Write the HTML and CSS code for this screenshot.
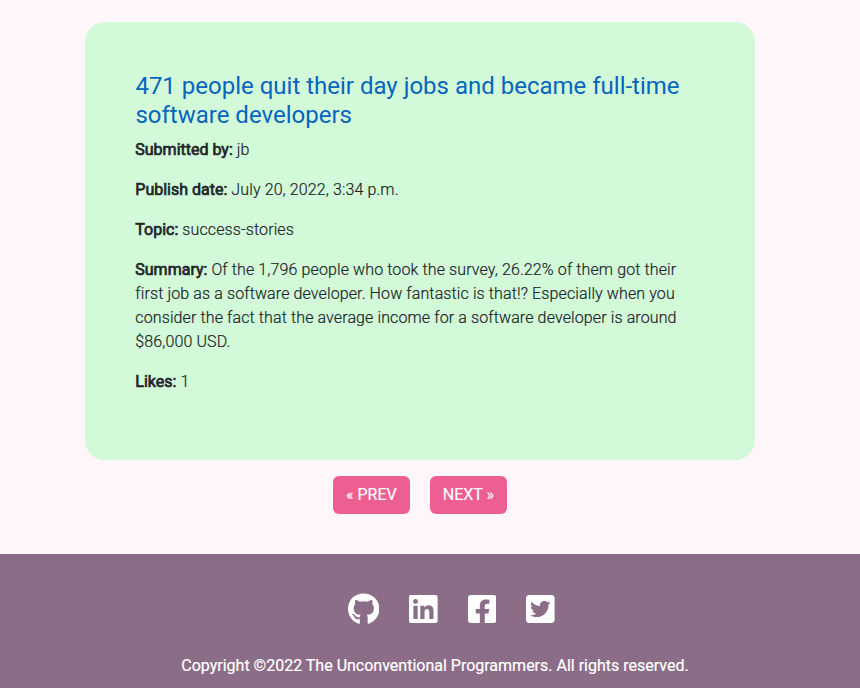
FILE: index.html
```html
<!DOCTYPE html>
<html lang="en">
<head>
<meta charset="utf-8">
<title>Success stories</title>
<link rel="stylesheet" href="styles.css">
</head>
<body>
<main>
  <article class="card">
    <h2><a href="#">471 people quit their day jobs and became full-time software developers</a></h2>
    <p><strong>Submitted by:</strong> jb</p>
    <p><strong>Publish date:</strong> July 20, 2022, 3:34 p.m.</p>
    <p><strong>Topic:</strong> success-stories</p>
    <p><strong>Summary:</strong> Of the 1,796 people who took the survey, 26.22% of them got their first job as a software developer. How fantastic is that!? Especially when you consider the fact that the average income for a software developer is around $86,000 USD.</p>
    <p><strong>Likes:</strong> 1</p>
  </article>
  <nav class="pager">
    <a class="btn" href="#">« PREV</a>
    <a class="btn" href="#">NEXT »</a>
  </nav>
</main>
<footer>
  <div class="social">
    <a href="#"><svg width="31.400" height="32" viewBox="0 0 496 512" preserveAspectRatio="none"><path d="M165.900 397.400c0 2-2.300 3.600-5.200 3.600-3.300.3-5.600-1.300-5.600-3.600 0-2 2.300-3.600 5.200-3.600 3-.3 5.600 1.300 5.600 3.600zM244.800 8C106.100 8 0 113.300 0 252c0 110.900 69.800 205.800 169.500 239.200 12.800 2.300 17.300-5.600 17.300-12.100 0-6.200-.3-40.400-.3-61.400 0 0-70 15-84.700-29.800 0 0-11.400-29.100-27.800-36.600 0 0-22.900-15.700 1.600-15.400 0 0 24.900 2 38.600 25.800 21.900 38.600 58.600 27.500 72.900 20.900 2.300-16 8.800-27.100 16-33.700-55.900-6.200-112.300-14.300-112.300-110.500 0-27.500 7.600-41.300 23.600-58.900-2.600-6.500-11.100-33.300 2.600-67.900 20.900-6.500 69 27 69 27 20-5.600 41.500-8.500 62.800-8.500s42.800 2.900 62.800 8.500c0 0 48.100-33.600 69-27 13.700 34.700 5.200 61.400 2.600 67.900 16 17.700 25.800 31.500 25.800 58.900 0 96.500-58.900 104.200-114.800 110.500 9.200 7.900 17 22.900 17 46.400 0 33.700-.3 75.400-.3 83.600 0 6.500 4.600 14.400 17.300 12.100C428.200 457.800 496 362.900 496 252 496 113.300 383.500 8 244.800 8z"/></svg></a>
    <a href="#"><svg width="28.600" height="32" viewBox="0 0 448 512" preserveAspectRatio="none"><path d="M416 32H31.900C14.300 32 0 46.500 0 64.300v383.400C0 465.500 14.300 480 31.900 480H416c17.600 0 32-14.500 32-32.300V64.300c0-17.800-14.400-32.300-32-32.300zM135.400 416H69V202.200h66.500V416zm-33.200-243c-21.300 0-38.500-17.300-38.500-38.500S80.900 96 102.200 96c21.200 0 38.500 17.300 38.500 38.500 0 21.300-17.200 38.500-38.500 38.500zm282.100 243h-66.400V312c0-24.800-.5-56.700-34.500-56.700-34.600 0-39.900 27-39.900 54.900V416h-66.400V202.200h63.700v29.200h.9c8.900-16.800 30.600-34.500 62.900-34.500 67.200 0 79.700 44.300 79.700 101.900V416z"/></svg></a>
    <a href="#"><svg width="28.600" height="32" viewBox="0 0 448 512" preserveAspectRatio="none"><path d="M400 32H48A48 48 0 0 0 0 80v352a48 48 0 0 0 48 48h137.250V327.690h-63V256h63v-54.640c0-62.150 37-96.480 93.670-96.480 27.140 0 55.520 4.840 55.520 4.840v61h-31.270c-30.810 0-40.420 19.120-40.420 38.730V256h68.780l-11 71.690h-57.780V480H400a48 48 0 0 0 48-48V80a48 48 0 0 0-48-48z"/></svg></a>
    <a href="#"><svg width="28.600" height="32" viewBox="0 0 448 512" preserveAspectRatio="none"><path d="M400 32H48C21.500 32 0 53.500 0 80v352c0 26.500 21.500 48 48 48h352c26.500 0 48-21.500 48-48V80c0-26.500-21.500-48-48-48zm-48.900 158.800c.2 2.800.2 5.700.2 8.500 0 86.700-66 186.600-186.600 186.600-37.200 0-71.700-10.800-100.700-29.400 5.300.6 10.400.8 15.800.8 30.700 0 58.900-10.400 81.400-28-28.800-.6-53-19.500-61.300-45.500 10.100 1.500 19.200 1.500 29.600-1.200-30-6.100-52.500-32.500-52.500-64.400v-.8c8.700 4.900 18.900 7.900 29.600 8.300a65.447 65.447 0 0 1-29.200-54.600c0-12.200 3.200-23.400 8.900-33.100 32.300 39.800 80.800 65.800 135.200 68.600-9.300-44.500 24-80.600 64-80.600 18.900 0 35.900 7.900 47.900 20.700 14.800-2.800 29-8.300 41.600-15.800-4.900 15.200-15.200 28-28.800 36.100 13.200-1.400 26-5.100 37.800-10.200-8.900 13.100-20.100 24.700-32.900 34z"/></svg></a>
  </div>
  <p>Copyright ©2022 The Unconventional Programmers. All rights reserved.</p>
</footer>
</body>
</html>
```
FILE: styles.css
```css
* { box-sizing: border-box; }
body { margin: 0; background: #fff6f9; color: #212529; font: 300 16px/24px Roboto, sans-serif; overflow: hidden; }
main { height: 554px; padding-top: 22px; }
.card { width: 670px; height: 438px; margin-left: 85px; padding: 50px 70px 50px 50px; background: #d3fad8; border-radius: 20px; }
.card h2 { margin: 0 -20px 8px 0; padding-left: 0.4px; font-size: 24px; line-height: 28.8px; font-weight: 400; }
h2 a { color: #0565c0; text-decoration: none; }
p { margin: 0 0 16px; }
.card p { padding-left: 0.3px; letter-spacing: 0.115px; -webkit-text-stroke: 0.2px currentColor; }
.card strong { font-weight: 400; letter-spacing: 0; -webkit-text-stroke: 0.7px currentColor; }
.pager { display: flex; justify-content: center; gap: 20px; margin: 16px 20px 0 0; }
.btn { height: 38px; padding: 7px 13px; border-radius: 6px; background: #ed5f92; color: #fff; font-weight: 400; text-decoration: none; -webkit-text-stroke: 0.15px currentColor; }
footer { height: 134px; padding-top: 39px; background: #8c6d88; color: #fff; font-weight: 400; }
.social { display: flex; gap: 29.8px; padding-left: 348px; height: 61px; }
.social svg { display: block; fill: #fff; }
footer p { margin: 0 0 0 10px; text-align: center; -webkit-text-stroke: 0.2px currentColor; }
```
